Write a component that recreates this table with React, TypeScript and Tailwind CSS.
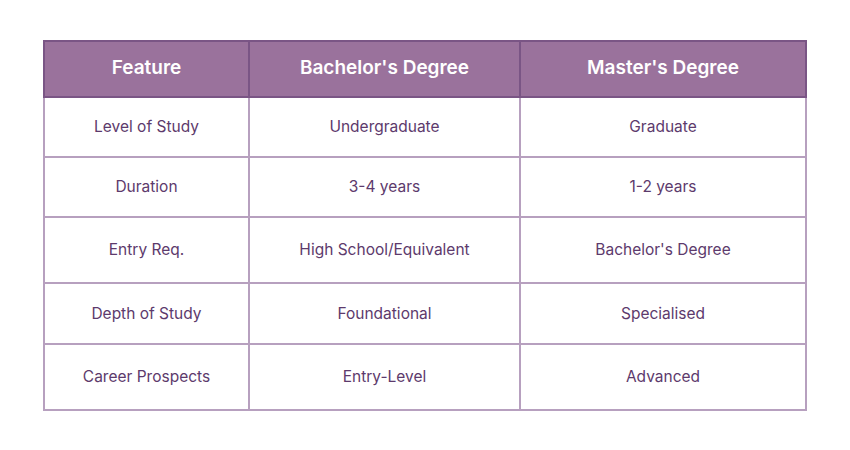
const rows: { cells: [string, string, string]; h: string }[] = [
  { cells: ["Level of Study", "Undergraduate", "Graduate"], h: "h-[60px]" },
  { cells: ["Duration", "3-4 years", "1-2 years"], h: "h-[60px]" },
  { cells: ["Entry Req.", "High School/Equivalent", "Bachelor's Degree"], h: "h-[66px]" },
  { cells: ["Depth of Study", "Foundational", "Specialised"], h: "h-[61px]" },
  { cells: ["Career Prospects", "Entry-Level", "Advanced"], h: "h-[66px]" },
];

export default function App() {
  return (
    <div className="h-[450px] w-[850px] bg-white pl-[43px] pt-[40px] font-['Inter',sans-serif]">
      <table className="w-[762px] table-fixed border-collapse">
        <colgroup>
          <col className="w-[205px]" />
          <col className="w-[271px]" />
          <col className="w-[286px]" />
        </colgroup>
        <thead>
          <tr className="h-[56px] bg-[#9a729c] text-white">
            {["Feature", "Bachelor's Degree", "Master's Degree"].map((t) => (
              <th
                key={t}
                className="border-2 border-[#7a5585] pb-[2px] text-center text-[19px] font-semibold"
              >
                {t}
              </th>
            ))}
          </tr>
        </thead>
        <tbody>
          {rows.map((r, i) => (
            <tr
              key={r.cells[0]}
              className={r.h + (i === rows.length - 1 ? " border-b-2 border-[#6f4a7c]" : "")}
            >
              {r.cells.map((c) => (
                <td
                  key={c}
                  className="border-2 border-[#b7a0bf] text-center text-[15.5px] text-[#5d3a6c]"
                >
                  {c}
                </td>
              ))}
            </tr>
          ))}
        </tbody>
      </table>
    </div>
  );
}
